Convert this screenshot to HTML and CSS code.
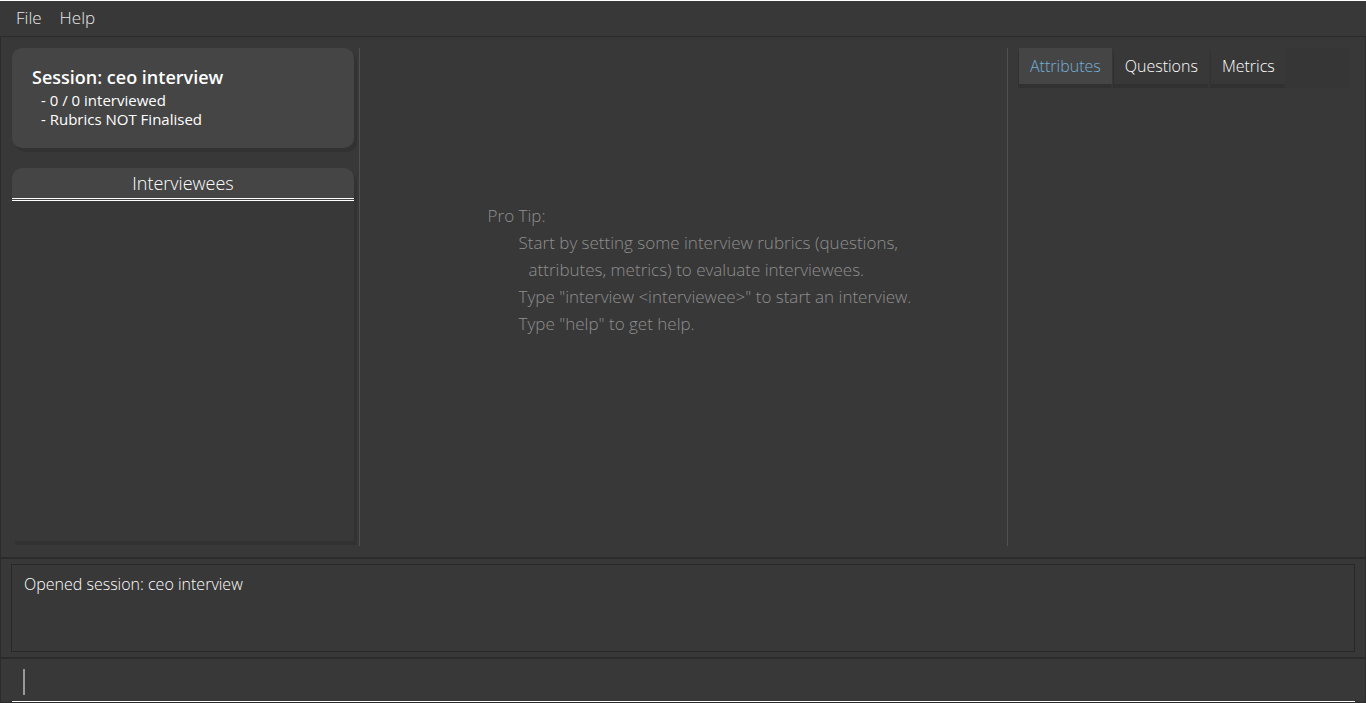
FILE: index.html
```html
<!DOCTYPE html>
<html lang="en">
<head>
<meta charset="utf-8">
<title>Interview Session</title>
<link rel="stylesheet" href="styles.css">
</head>
<body>
<nav class="menu-bar">
  <button type="button" class="menu">File</button>
  <button type="button" class="menu">Help</button>
</nav>
<main class="workspace">
  <aside class="sidebar">
    <section class="session-card">
      <h1 class="session-title">Session: ceo interview</h1>
      <p class="session-line">- 0 / 0 interviewed</p>
      <p class="session-line">- Rubrics NOT Finalised</p>
    </section>
    <section class="people">
      <h2 class="people-title">Interviewees</h2>
    </section>
  </aside>
  <section class="detail">
    <div class="tip">
      <p class="tip-line">Pro Tip:</p>
      <p class="tip-line tip-item">Start by setting some interview rubrics (questions,</p>
      <p class="tip-line tip-wrap">attributes, metrics) to evaluate interviewees.</p>
      <p class="tip-line tip-item">Type "interview &lt;interviewee&gt;" to start an interview.</p>
      <p class="tip-line tip-item">Type "help" to get help.</p>
    </div>
  </section>
  <aside class="rubrics">
    <div class="tabs" role="tablist">
      <button type="button" class="tab tab-active" role="tab" aria-selected="true">Attributes</button>
      <button type="button" class="tab" role="tab" aria-selected="false">Questions</button>
      <button type="button" class="tab" role="tab" aria-selected="false">Metrics</button>
    </div>
  </aside>
</main>
<section class="result-area">
  <output class="result">Opened session: ceo interview</output>
</section>
<footer class="command-area">
  <div class="command-line">
    <span class="caret"></span>
    <input class="command" type="text" aria-label="Command">
  </div>
</footer>
</body>
</html>
```

FILE: styles.css
```css
* {
  box-sizing: border-box;
}

body {
  display: flex;
  flex-direction: column;
  height: 100vh;
  margin: 0;
  border-top: 1px solid #fff;
  background: #383838;
  color: #fff;
  font-family: "Open Sans", "Noto Sans", sans-serif;
  font-size: 17px;
  font-weight: 300;
}

h1, h2, p {
  margin: 0;
}

button {
  border: 0;
  color: inherit;
  font: inherit;
}

.menu-bar {
  display: flex;
  gap: 2px;
  height: 36px;
  padding: 0 8px 2px;
  border-bottom: 1px solid #2b2b2b;
}

.menu {
  padding: 0 8px;
  background: none;
  color: #e8e8e8;
}

.workspace {
  display: flex;
  flex: 1;
  min-height: 0;
  padding: 11px;
  border: 1px solid #2b2b2b;
  border-width: 0 1px;
}

.sidebar {
  display: flex;
  flex: 0 0 348px;
  flex-direction: column;
  gap: 20px;
  padding: 0 5px 5px 0;
  border-right: 1px solid #505050;
}

.session-card {
  height: 100px;
  padding: 18px 20px;
  border-radius: 10px;
  background: #454545;
  box-shadow: 3px 4px 0 #323232;
}

.session-title {
  margin-bottom: 3px;
  font-size: 18px;
  font-weight: 600;
  line-height: 22px;
}

.session-line {
  padding-left: 9px;
  font-size: 15px;
  font-weight: 400;
  line-height: 19px;
}

.people {
  flex: 1;
  border-radius: 10px 10px 0 0;
  background: #383838;
  box-shadow: 3px 4px 0 #323232;
}

.people-title {
  height: 33px;
  border-bottom: 3px double #fff;
  border-radius: 10px 10px 0 0;
  background: #454545;
  font-size: 18px;
  font-weight: 300;
  line-height: 30px;
  text-align: center;
}

.detail {
  display: flex;
  flex: 1;
  justify-content: center;
  padding: 154px 0 0 32px;
  border-right: 1px solid #505050;
}

.tip {
  color: #8f8f8f;
}

.tip-line {
  line-height: 27px;
  white-space: nowrap;
}

.tip-item {
  padding-left: 31px;
}

.tip-wrap {
  padding-left: 41px;
}

.rubrics {
  flex: 0 0 346px;
  padding: 0 4px 0 11px;
}

.tabs {
  display: flex;
  gap: 2px;
  height: 40px;
  background: #363636;
}

.tab {
  height: 36px;
  padding: 0 11px;
  background: #383838;
  box-shadow: -1px 4px 0 #313131;
  font-size: 16px;
}

.tab-active {
  background: #454545;
  color: #74b0d8;
}

.result-area {
  height: 100px;
  padding: 5px 10px;
  border: 1px solid #2b2b2b;
  border-width: 2px 1px 0;
}

.result {
  display: block;
  height: 88px;
  padding: 7px 12px;
  border: 1px solid #282828;
  font-size: 16px;
  line-height: 24px;
}

.command-area {
  height: 46px;
  padding: 0 10px 0 11px;
  border: 1px solid #2b2b2b;
  border-width: 2px 1px 1px;
}

.command-line {
  display: flex;
  align-items: center;
  height: 43px;
  padding: 4px 11px 0;
  border-bottom: 1px solid #fff;
}

.caret {
  width: 2px;
  height: 26px;
  background: #999;
}

.command {
  flex: 1;
  padding: 0;
  border: 0;
  outline: 0;
  background: none;
  color: inherit;
  font: inherit;
}
```
